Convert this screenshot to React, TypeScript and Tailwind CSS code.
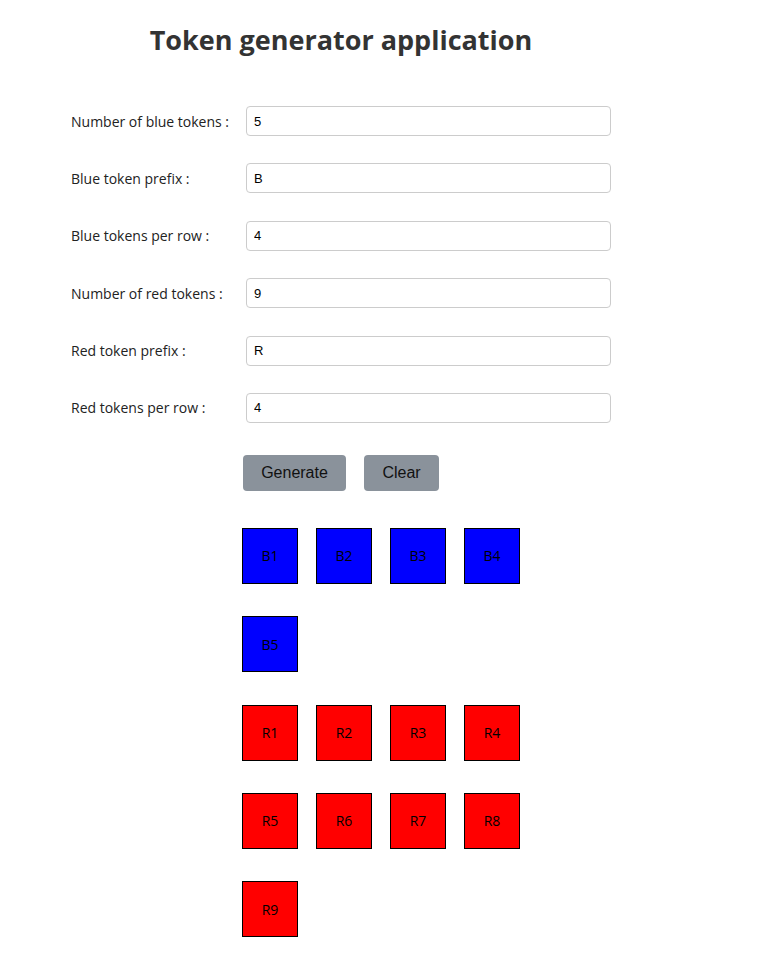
import React from 'react';

const fields = [
  { label: 'Number of blue tokens :', value: '5' },
  { label: 'Blue token prefix :', value: 'B' },
  { label: 'Blue tokens per row :', value: '4' },
  { label: 'Number of red tokens :', value: '9' },
  { label: 'Red token prefix :', value: 'R' },
  { label: 'Red tokens per row :', value: '4' },
];

function chunk(items: string[], size: number) {
  const rows: string[][] = [];
  for (let i = 0; i < items.length; i += size) rows.push(items.slice(i, i + size));
  return rows;
}

const blue = chunk(['B1', 'B2', 'B3', 'B4', 'B5'], 4);
const red = chunk(['R1', 'R2', 'R3', 'R4', 'R5', 'R6', 'R7', 'R8', 'R9'], 4);

function Token({ name, color }: { name: string; color: 'blue' | 'red' }) {
  return (
    <div
      className={`w-[56px] h-[56px] border border-black flex items-center justify-center text-[14px] text-black font-['Open_Sans',sans-serif] ${
        color === 'blue' ? 'bg-[#0000ff]' : 'bg-[#ff0000]'
      }`}
    >
      {name}
    </div>
  );
}

export default function App() {
  return (
    <div className="w-[762px] bg-white font-['Open_Sans',sans-serif] text-[#333]">
      <h1 className="w-[682px] pt-[22px] text-center text-[27px] leading-[36px] font-bold text-[#333]">
        Token generator application
      </h1>

      <div className="mt-[48px] flex flex-col gap-[27.4px] pl-[71px]">
        {fields.map((f) => (
          <div key={f.label} className="flex items-center h-[30px]">
            <label className="w-[175px] text-[14px] text-[#222]">{f.label}</label>
            <input
              readOnly
              value={f.value}
              className="w-[365px] h-[30px] border border-[#ccc] rounded-[4px] px-[7px] text-[13px] text-black font-['Liberation_Sans',sans-serif] outline-none"
            />
          </div>
        ))}
      </div>

      <div className="mt-[32px] flex gap-[18px] pl-[243px]">
        <button className="h-[36px] w-[103px] rounded-[4px] bg-[#8a929b] text-[16px] text-[#111] font-['Liberation_Sans',sans-serif]">
          Generate
        </button>
        <button className="h-[36px] w-[75px] rounded-[4px] bg-[#8a929b] text-[16px] text-[#111] font-['Liberation_Sans',sans-serif]">
          Clear
        </button>
      </div>

      <div className="mt-[37px] pl-[242px] flex flex-col gap-[32.3px] pb-[20px]">
        {blue.map((row, i) => (
          <div key={'b' + i} className="flex gap-[18px]">
            {row.map((t) => (
              <Token key={t} name={t} color="blue" />
            ))}
          </div>
        ))}
        {red.map((row, i) => (
          <div key={'r' + i} className="flex gap-[18px]">
            {row.map((t) => (
              <Token key={t} name={t} color="red" />
            ))}
          </div>
        ))}
      </div>
    </div>
  );
}
